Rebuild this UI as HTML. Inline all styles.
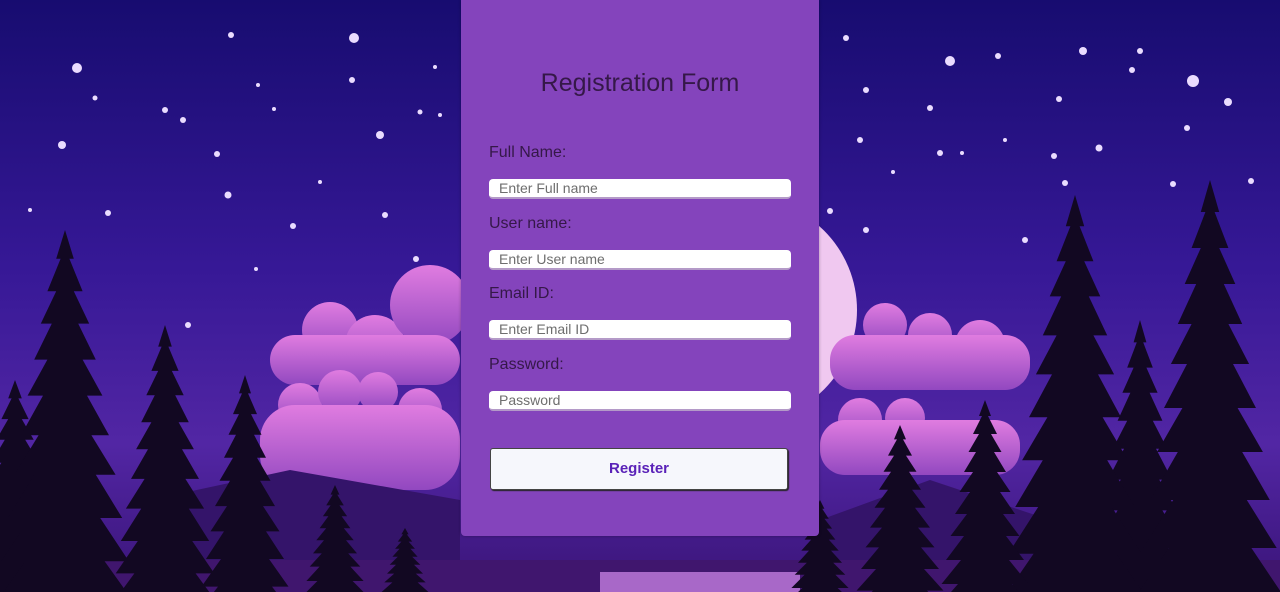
<!DOCTYPE html>
<html><head><meta charset="utf-8"><style>
html,body{margin:0;padding:0;width:1280px;height:592px;overflow:hidden;font-family:"Liberation Sans",sans-serif}
#bg{position:absolute;left:0;top:0;display:block}
.card{position:absolute;left:461px;top:0;width:358px;height:536px;background:#8444bc;border-radius:0 0 4px 4px;box-shadow:0 0 3px rgba(0,0,0,.3)}
h1{position:absolute;left:0;width:358px;top:69px;margin:0;text-align:center;font-weight:normal;font-size:25px;color:#351848}
.lbl{position:absolute;left:28px;font-size:16px;color:#351848}
.in{position:absolute;left:28px;height:18px;background:#fff;border-radius:4px;border-bottom:2px solid #b49ac8;font-size:14px;color:#6e6e6e;line-height:18px;padding-left:10px;width:292px}
.btn{position:absolute;left:29px;top:448px;width:296px;height:40px;background:#f6f7fc;border:1px solid #444;border-radius:3px;box-shadow:1px 1px 1px #222;text-align:center;line-height:40px;font-weight:bold;font-size:15px;color:#5a22b8}
</style></head><body>
<svg id="bg" width="1280" height="592" viewBox="0 0 1280 592">
<defs>
<linearGradient id="sky" x1="0" y1="0" x2="0" y2="1">
<stop offset="0" stop-color="#170c70"/><stop offset="0.45" stop-color="#361896"/><stop offset="0.75" stop-color="#5226a4"/><stop offset="1" stop-color="#3a1478"/></linearGradient>
<linearGradient id="cl" x1="0" y1="0" x2="0" y2="1"><stop offset="0" stop-color="#e07ce0"/><stop offset="1" stop-color="#9248c0"/></linearGradient>
<path id="t" d="M0,0 L4,8 L2,8 L8,17 L4,17 L11,26 L6,26 L14,36 L8,36 L17,46 L10,46 L20,57 L12,57 L23,68 L14,68 L26,80 L16,80 L29,92 L18,92 L32,104 L-32,104 L-18,92 L-29,92 L-16,80 L-26,80 L-14,68 L-23,68 L-12,57 L-20,57 L-10,46 L-17,46 L-8,36 L-14,36 L-6,26 L-11,26 L-4,17 L-8,17 L-2,8 L-4,8 Z" fill="#120822"/>
</defs>
<rect width="1280" height="592" fill="url(#sky)"/>
<circle cx="745" cy="310" r="112" fill="#f0c8f0"/>
<g fill="url(#cl)">
<circle cx="330" cy="330" r="28"/><circle cx="375" cy="345" r="30"/><circle cx="430" cy="305" r="40"/><rect x="270" y="335" width="190" height="50" rx="25"/>
<circle cx="300" cy="405" r="22"/><circle cx="340" cy="392" r="22"/><circle cx="378" cy="392" r="20"/><circle cx="420" cy="410" r="22"/><rect x="260" y="405" width="200" height="85" rx="35"/>
<circle cx="885" cy="325" r="22"/><circle cx="930" cy="335" r="22"/><circle cx="980" cy="345" r="25"/><rect x="830" y="335" width="200" height="55" rx="25"/>
<circle cx="860" cy="420" r="22"/><circle cx="905" cy="418" r="20"/><rect x="820" y="420" width="200" height="55" rx="25"/>
</g>
<path d="M150,500 L290,470 L460,500 L460,592 L150,592Z M820,520 L930,480 L1050,520 L1050,592 L820,592Z" fill="#34146a"/>
<rect x="0" y="560" width="1280" height="32" fill="#40166e"/>
<rect x="600" y="572" width="200" height="20" fill="#a868c8"/>
<g fill="#eadcff">
<circle cx="77" cy="68" r="5"/><circle cx="95" cy="98" r="2.5"/><circle cx="62" cy="145" r="4"/><circle cx="165" cy="110" r="3"/><circle cx="183" cy="120" r="3"/><circle cx="217" cy="154" r="3"/><circle cx="231" cy="35" r="3"/><circle cx="258" cy="85" r="2"/><circle cx="274" cy="109" r="2"/><circle cx="228" cy="195" r="3.5"/><circle cx="108" cy="213" r="3"/><circle cx="30" cy="210" r="2"/><circle cx="354" cy="38" r="5"/><circle cx="352" cy="80" r="3"/><circle cx="380" cy="135" r="4"/><circle cx="385" cy="215" r="3"/><circle cx="293" cy="226" r="3"/><circle cx="416" cy="259" r="3"/><circle cx="256" cy="269" r="2"/><circle cx="188" cy="325" r="3"/><circle cx="435" cy="67" r="2"/><circle cx="420" cy="112" r="2.5"/><circle cx="440" cy="115" r="2"/><circle cx="320" cy="182" r="2"/>
<circle cx="846" cy="38" r="3"/><circle cx="950" cy="61" r="5"/><circle cx="998" cy="56" r="3"/><circle cx="1083" cy="51" r="4"/><circle cx="1140" cy="51" r="3"/><circle cx="1132" cy="70" r="3"/><circle cx="1193" cy="81" r="6"/><circle cx="1228" cy="102" r="4"/><circle cx="1059" cy="99" r="3"/><circle cx="866" cy="90" r="3"/><circle cx="930" cy="108" r="3"/><circle cx="860" cy="140" r="3"/><circle cx="940" cy="153" r="3"/><circle cx="962" cy="153" r="2"/><circle cx="1005" cy="140" r="2"/><circle cx="1054" cy="156" r="3"/><circle cx="1099" cy="148" r="3.5"/><circle cx="1187" cy="128" r="3"/><circle cx="1065" cy="183" r="3"/><circle cx="1173" cy="184" r="3"/><circle cx="1251" cy="181" r="3"/><circle cx="830" cy="211" r="3"/><circle cx="866" cy="230" r="3"/><circle cx="1025" cy="240" r="3"/><circle cx="893" cy="172" r="2"/>
</g>
<use href="#t" transform="translate(15,380) scale(1.7,2.3)"/>
<use href="#t" transform="translate(65,230) scale(2.2,3.6)"/>
<use href="#t" transform="translate(165,325) scale(1.7,2.7)"/>
<use href="#t" transform="translate(245,375) scale(1.5,2.3)"/>
<use href="#t" transform="translate(335,485) scale(1.1,1.2)"/>
<use href="#t" transform="translate(405,528) scale(0.9,0.8)"/>
<use href="#t" transform="translate(1140,320) scale(1.6,2.8)"/>
<use href="#t" transform="translate(1075,195) scale(2.3,3.9)"/>
<use href="#t" transform="translate(1210,180) scale(2.3,4)"/>
<use href="#t" transform="translate(985,400) scale(1.5,2)"/>
<use href="#t" transform="translate(900,425) scale(1.5,1.8)"/>
<use href="#t" transform="translate(820,500) scale(1.1,1.1)"/>
</svg>
<div class="card">
<h1>Registration Form</h1>
<div class="lbl" style="top:144px">Full Name:</div>
<div class="in" style="top:179px">Enter Full name</div>
<div class="lbl" style="top:215px">User name:</div>
<div class="in" style="top:250px">Enter User name</div>
<div class="lbl" style="top:285px">Email ID:</div>
<div class="in" style="top:320px">Enter Email ID</div>
<div class="lbl" style="top:356px">Password:</div>
<div class="in" style="top:391px">Password</div>
<div class="btn">Register</div>
</div>
</body></html>
